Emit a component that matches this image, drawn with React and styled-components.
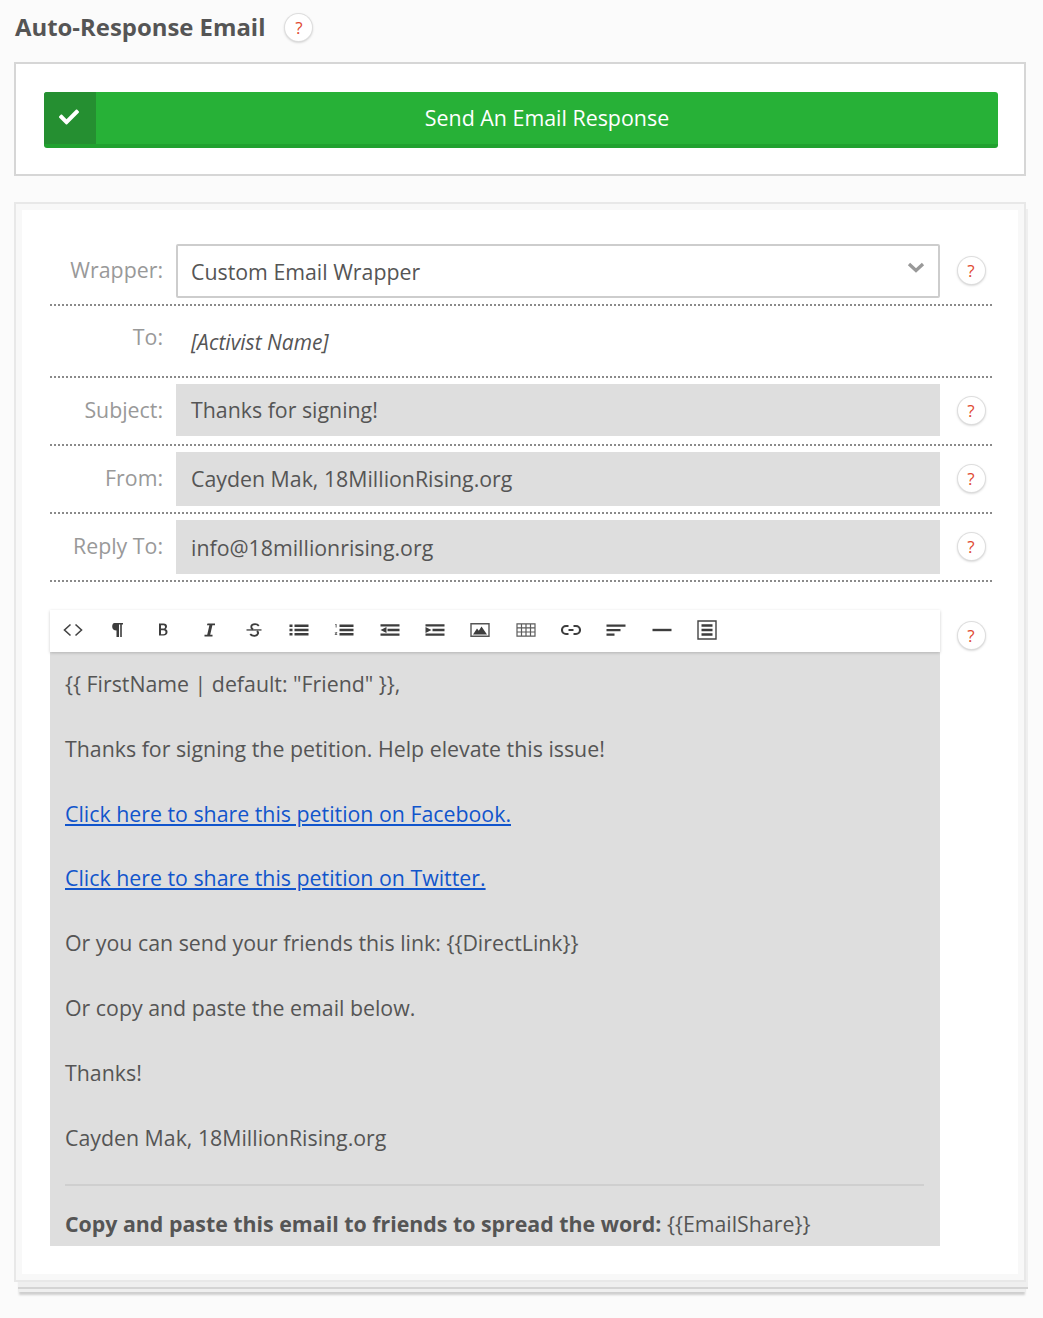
import styled, { createGlobalStyle } from "styled-components";
import { FaCheck } from "react-icons/fa";

const Global = createGlobalStyle`
  html, body {
    margin: 0;
    padding: 0;
    background: #fbfbfb;
    font-family: "Open Sans", "Liberation Sans", sans-serif;
    color: #555;
  }
`;

const HelpBadge = () => <Help>?</Help>;

const IconSvg = ({ children }) => (
  <svg width="20" height="20" viewBox="0 0 20 20" fill="#3d3d3d">
    {children}
  </svg>
);

const toolbarIcons = [
  <path d="M7.500 4.500 1.500 10l6 5.500M12.500 4.500l6 5.500-6 5.500" fill="none" stroke="#444" strokeWidth="1.600" />,
  <path d="M6.500 3h8.500v1.600h-1.200V17h-1.600V4.600h-1.200V17H8.500v-6.500c-2.700 0-4.300-1.700-4.300-3.800S5 3 6.500 3z" />,
  <path fillRule="evenodd" d="M6 3.500h4.500c2.300 0 3.500 1.200 3.500 3 0 1.200-.6 2.100-1.600 2.600 1.300.4 2.100 1.400 2.100 2.900 0 2.200-1.500 3.500-4 3.500H6zm2 1.800v3.200h2.200c1.200 0 1.800-.6 1.800-1.600s-.6-1.600-1.800-1.600zm0 5v3.900h2.400c1.300 0 2.100-.8 2.100-2s-.8-1.900-2.100-1.900z" />,
  <path d="M8.500 3.500h7.500v1.800h-2.600l-2.200 9.400H13.500v1.800H5.500v-1.800h2.700l2.200-9.400H7.900z" />,
  <g>
    <path d="M14.800 5.800c-.8-1-2-1.700-3.700-1.700-2.300 0-3.800 1.100-3.800 2.800 0 1.300.8 2 1.800 2.500M12.800 11.200c1 .5 1.600 1.100 1.200 2.300-.5 1.500-1.800 2.400-3.800 2.400-1.700 0-3.100-.7-4-1.800" fill="none" stroke="#3d3d3d" strokeWidth="1.900" />
    <path d="M2.500 9.300h15v1.300h-15z" />
  </g>,
  <path d="M0.500 4.500h3v2.600h-3zM0.500 8.700h3v2.600h-3zM0.500 12.900h3v2.600h-3zM5.500 4.500h14v2.600h-14zM5.500 8.700h14v2.600h-14zM5.500 12.900h14v2.600h-14z" />,
  <g>
    <path d="M5.500 4.500h14v2.600h-14zM5.500 8.700h14v2.600h-14zM5.500 12.900h14v2.600h-14z" />
    <path d="M1.500 4h1v3.500h-.8V5h-.5zM.8 12.200h2.400v.7l-1.300 1.200h1.300v.7H.8v-.7l1.500-1.400H.8z" />
  </g>,
  <path d="M.5 4.200h19v2.400H.5zM7.500 8.800h12v2.400h-12zM.5 13.400h19v2.400H.5zM6.500 7v6L.5 10z" />,
  <path d="M.5 4.200h19v2.400H.5zM7.500 8.800h12v2.400h-12zM.5 13.400h19v2.400H.5zM.5 7v6l6-3z" />,
  <g>
    <path d="M1 3.800h18v12.400H1z" fill="none" stroke="#555" strokeWidth="1.400" />
    <path d="M3 14.500 7 8.500l1.800 2.200L11.500 6.500 17 14.500z" />
  </g>,
  <path d="M1 3.800h18v12.400H1zM1 7.900h18M1 12h18M5.500 3.800v12.400M10 3.800v12.400M14.500 3.800v12.400" fill="none" stroke="#5c5c5c" strokeWidth="1.200" />,
  <path d="M7.500 6H5a4 4 0 0 0 0 8h2.500M12.500 6H15a4 4 0 0 1 0 8h-2.500M7.500 10h5" fill="none" stroke="#3d3d3d" strokeWidth="2.100" />,
  <path d="M.5 4.500h19v2.300H.5zM.5 9h14v2.300H.5zM.5 13.500h8v2.300H.5z" />,
  <path d="M.5 8.800h19v2.400H.5z" />,
  <g>
    <path d="M1 1h18v18H1z" fill="none" stroke="#444" strokeWidth="1.400" />
    <path d="M4.500 4.200h11v2.500h-11zM4.500 8.800h11v2.500h-11zM4.500 13.300h11v2.500h-11z" />
  </g>,
];

const App = () => (
  <>
    <Global />
    <Page>
      <TitleRow>
        <Title>Auto-Response Email</Title>
        <HelpBadge />
      </TitleRow>

      <ToggleBox>
        <ToggleButton>
          <ToggleCheck>
            <FaCheck size={20} color="#fff" />
          </ToggleCheck>
          <ToggleLabel>Send An Email Response</ToggleLabel>
        </ToggleButton>
      </ToggleBox>

      <Card>
        <Row $height={66} $top={4}>
          <Label>Wrapper:</Label>
          <SelectField>
            Custom Email Wrapper
            <Chevron width="18" height="11" viewBox="0 0 18 11">
              <path d="M2 2l7 6.500L16 2" fill="none" stroke="#999" strokeWidth="3.300" />
            </Chevron>
          </SelectField>
          <HelpCell>
            <HelpBadge />
          </HelpCell>
        </Row>
        <Row $height={72} $top={5}>
          <Label>To:</Label>
          <StaticValue>[Activist Name]</StaticValue>
        </Row>
        <Row $height={68} $top={6}>
          <Label>Subject:</Label>
          <Field $height={52} $lift={2}>Thanks for signing!</Field>
          <HelpCell>
            <HelpBadge />
          </HelpCell>
        </Row>
        <Row $height={68} $top={6}>
          <Label>From:</Label>
          <Field $height={54} $lift={2}>Cayden Mak, 18MillionRising.org</Field>
          <HelpCell>
            <HelpBadge />
          </HelpCell>
        </Row>
        <Row $height={68} $top={6}>
          <Label>Reply To:</Label>
          <Field $height={54}>info@18millionrising.org</Field>
          <HelpCell>
            <HelpBadge />
          </HelpCell>
        </Row>

        <EditorRow>
          <Editor>
            <Toolbar>
              {toolbarIcons.map((icon, i) => (
                <ToolButton key={i}>
                  <IconSvg>{icon}</IconSvg>
                </ToolButton>
              ))}
            </Toolbar>
            <Body>
              <Para>{'{{ FirstName | default: "Friend" }},'}</Para>
              <Para>Thanks for signing the petition. Help elevate this issue!</Para>
              <Para>
                <EmailLink href="#">Click here to share this petition on Facebook.</EmailLink>
              </Para>
              <Para>
                <EmailLink href="#">Click here to share this petition on Twitter.</EmailLink>
              </Para>
              <Para>{"Or you can send your friends this link: {{DirectLink}}"}</Para>
              <Para>Or copy and paste the email below.</Para>
              <Para>Thanks!</Para>
              <Para>Cayden Mak, 18MillionRising.org</Para>
              <Rule />
              <LastPara>
                <strong>Copy and paste this email to friends to spread the word:</strong>{" "}
                {"{{EmailShare}}"}
              </LastPara>
            </Body>
          </Editor>
          <EditorHelp>
            <HelpBadge />
          </EditorHelp>
        </EditorRow>
      </Card>
    </Page>
  </>
);

export default App;

const Page = styled.div`
  width: 1043px;
  height: 1318px;
  padding: 0 17px 0 14px;
  box-sizing: border-box;
  overflow: hidden;
`;

const TitleRow = styled.div`
  display: flex;
  align-items: center;
  height: 54px;
  gap: 20px;
  margin-bottom: 8px;
`;

const Title = styled.h2`
  margin: 0 0 0 1px;
  font-size: 23.900px;
  line-height: 54px;
  font-weight: 700;
  color: #555;
`;

const Help = styled.span`
  display: inline-flex;
  align-items: center;
  justify-content: center;
  width: 27px;
  height: 27px;
  border-radius: 50%;
  background: #fff;
  box-shadow: 0 0 0 1px #dedede, 0 1px 3px rgba(0, 0, 0, 0.3);
  color: #e0492f;
  font-size: 17px;
  line-height: 1;
`;

const ToggleBox = styled.div`
  box-sizing: border-box;
  height: 114px;
  background: #fff;
  border: 2px solid #d6d6d6;
  padding: 28px 26px 28px 28px;
  margin-bottom: 26px;
`;

const ToggleButton = styled.div`
  display: flex;
  height: 56px;
  box-sizing: border-box;
  background: #27b137;
  border-bottom: 4px solid #21a12f;
  border-radius: 3px;
  overflow: hidden;
`;

const ToggleCheck = styled.div`
  width: 52px;
  display: flex;
  justify-content: center;
  padding: 15px 2px 0 0;
  box-sizing: border-box;
  background: #258f31;
`;

const ToggleLabel = styled.div`
  flex: 1;
  text-align: center;
  font-size: 21.400px;
  line-height: 52px;
  color: #fff;
`;

const Card = styled.div`
  box-sizing: border-box;
  height: 1080px;
  background: #fff;
  border: 2px solid #e8e8e8;
  outline: 6px solid #f8f8f8;
  outline-offset: -8px;
  padding: 36px 32px 0 34px;
  box-shadow: 3px 6px 0 -1px #efefef, 3px 8px 0 -1px #d4d4d4,
    2px 13px 0 -3px #efefef, 2px 16px 2px -3px #cfcfcf;
`;

const Row = styled.div`
  display: flex;
  align-items: flex-start;
  height: ${(p) => p.$height}px;
  padding-top: ${(p) => p.$top}px;
  box-sizing: border-box;
  border-bottom: 2px dotted #8a8a8a;
`;

const Label = styled.div`
  flex: none;
  width: 113px;
  margin-right: 13px;
  padding-top: 11px;
  text-align: right;
  font-size: 21.330px;
  line-height: 29px;
  color: #999;
`;

const Field = styled.div`
  flex: none;
  width: 764px;
  height: ${(p) => p.$height}px;
  box-sizing: border-box;
  display: flex;
  align-items: center;
  padding: 0 0 ${(p) => p.$lift || 0}px 15px;
  background: #dedede;
  font-size: 21.330px;
  color: #555;
`;

const SelectField = styled.div`
  flex: none;
  width: 764px;
  height: 54px;
  box-sizing: border-box;
  display: flex;
  align-items: center;
  justify-content: space-between;
  padding: 0 13px 0 13px;
  background: #fff;
  border: 2px solid #cdcdcd;
  border-radius: 2px;
  font-size: 21.330px;
  color: #555;
`;

const Chevron = styled.svg`
  margin-bottom: 8px;
`;

const StaticValue = styled.div`
  padding: 17px 0 0 15px;
  font-size: 21px;
  line-height: 29px;
  font-style: italic;
  color: #555;
`;

const HelpCell = styled.div`
  flex: none;
  width: 52px;
  padding: 13px 0 0 10px;
  box-sizing: border-box;
  display: flex;
  justify-content: center;
`;

const EditorRow = styled.div`
  display: flex;
  align-items: flex-start;
  padding-top: 28px;
`;

const Editor = styled.div`
  flex: none;
  width: 890px;
`;

const EditorHelp = styled.div`
  flex: none;
  width: 52px;
  padding: 12px 0 0 10px;
  box-sizing: border-box;
  display: flex;
  justify-content: center;
`;

const Toolbar = styled.div`
  display: flex;
  align-items: center;
  height: 42px;
  padding-bottom: 3px;
  box-sizing: border-box;
  background: #fff;
  box-shadow: 0 1px 3px rgba(0, 0, 0, 0.2);
  position: relative;
`;

const ToolButton = styled.div`
  width: 45.300px;
  display: flex;
  justify-content: center;
`;

const Body = styled.div`
  height: 594px;
  box-sizing: border-box;
  padding: 16px 16px 0 15px;
  background: #dedede;
  font-size: 21.330px;
  line-height: 32.400px;
  color: #555;
`;

const Para = styled.p`
  margin: 0 0 32.400px;
`;

const LastPara = styled.p`
  margin: 0;
`;

const EmailLink = styled.a`
  color: #1155cc;
  text-decoration: underline;
`;

const Rule = styled.hr`
  margin: -2px 0 22px;
  border: 0;
  border-top: 2px solid #cfcfcf;
`;
